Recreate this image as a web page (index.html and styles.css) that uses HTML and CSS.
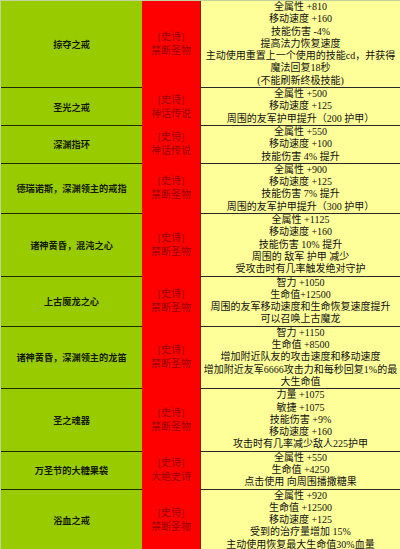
FILE: index.html
```html
<!DOCTYPE html>
<html lang="zh-CN">
<head>
<meta charset="utf-8">
<title>装备列表</title>
<link rel="stylesheet" href="styles.css">
</head>
<body>
<div class="sheet">
  <div class="row">
    <div class="name">掠夺之戒</div>
    <div class="rank"><span>[史诗]</span><span>禁断圣物</span></div>
    <div class="stats">
      <div>全属性 +810</div>
      <div>移动速度 +160</div>
      <div>技能伤害 -4%</div>
      <div>提高法力恢复速度</div>
      <div>主动使用重置上一个使用的技能cd，并获得</div>
      <div>魔法回复18秒</div>
      <div>(不能刷新终极技能)</div>
    </div>
  </div>
  <div class="row">
    <div class="name">圣光之戒</div>
    <div class="rank"><span>[史诗]</span><span>神话传说</span></div>
    <div class="stats">
      <div>全属性 +500</div>
      <div>移动速度 +125</div>
      <div>周围的友军护甲提升（200 护甲）</div>
    </div>
  </div>
  <div class="row">
    <div class="name">深渊指环</div>
    <div class="rank"><span>[史诗]</span><span>神话传说</span></div>
    <div class="stats">
      <div>全属性 +550</div>
      <div>移动速度 +100</div>
      <div>技能伤害 4% 提升</div>
    </div>
  </div>
  <div class="row">
    <div class="name">德瑞诺斯，深渊领主的戒指</div>
    <div class="rank"><span>[史诗]</span><span>禁断圣物</span></div>
    <div class="stats">
      <div>全属性 +900</div>
      <div>移动速度 +125</div>
      <div>技能伤害 7% 提升</div>
      <div>周围的友军护甲提升（300 护甲）</div>
    </div>
  </div>
  <div class="row">
    <div class="name">诸神黄昏，混沌之心</div>
    <div class="rank"><span>[史诗]</span><span>禁断圣物</span></div>
    <div class="stats">
      <div>全属性 +1125</div>
      <div>移动速度 +160</div>
      <div>技能伤害 10% 提升</div>
      <div>周围的 敌军 护甲 减少</div>
      <div>受攻击时有几率触发绝对守护</div>
    </div>
  </div>
  <div class="row">
    <div class="name">上古魔龙之心</div>
    <div class="rank"><span>[史诗]</span><span>禁断圣物</span></div>
    <div class="stats">
      <div>智力 +1050</div>
      <div>生命值+12500</div>
      <div>周围的友军移动速度和生命恢复速度提升</div>
      <div>可以召唤上古魔龙</div>
    </div>
  </div>
  <div class="row">
    <div class="name">诸神黄昏，深渊领主的龙笛</div>
    <div class="rank"><span>[史诗]</span><span>禁断圣物</span></div>
    <div class="stats">
      <div>智力 +1150</div>
      <div>生命值 +8500</div>
      <div>增加附近队友的攻击速度和移动速度</div>
      <div>增加附近友军6666攻击力和每秒回复1%的最</div>
      <div>大生命值</div>
    </div>
  </div>
  <div class="row">
    <div class="name">圣之魂器</div>
    <div class="rank"><span>[史诗]</span><span>禁断圣物</span></div>
    <div class="stats">
      <div>力量 +1075</div>
      <div>敏捷 +1075</div>
      <div>技能伤害 +9%</div>
      <div>移动速度 +160</div>
      <div>攻击时有几率减少敌人225护甲</div>
    </div>
  </div>
  <div class="row">
    <div class="name">万圣节的大糖果袋</div>
    <div class="rank"><span>[史诗]</span><span>大绝史诗</span></div>
    <div class="stats">
      <div>全属性 +550</div>
      <div>生命值 +4250</div>
      <div>点击使用 向周围播撒糖果</div>
    </div>
  </div>
  <div class="row">
    <div class="name">浴血之戒</div>
    <div class="rank"><span>[史诗]</span><span>禁断圣物</span></div>
    <div class="stats">
      <div>全属性 +920</div>
      <div>生命值 +12500</div>
      <div>移动速度 +125</div>
      <div>受到的治疗量增加 15%</div>
      <div>主动使用恢复最大生命值30%血量</div>
    </div>
  </div>
</div>
</body>
</html>
```
FILE: styles.css
```css
html, body {
  margin: 0;
  padding: 0;
  background: #ffffff;
}

.sheet {
  width: 400px;
  box-sizing: border-box;
  border-top: 1px solid #c3d29a;
  border-left: 1px solid #c3d29a;
  font-family: "Liberation Serif", "Noto Sans CJK SC", serif;
}

.row {
  display: grid;
  grid-template-columns: 141px 58px 200px;
}

.name {
  background: #99cc00;
  border-bottom: 1px solid #1f2a05;
  display: flex;
  align-items: center;
  justify-content: center;
  font-family: "Noto Sans CJK SC", "Noto Sans", sans-serif;
  font-size: 9.2px;
  font-weight: bold;
  color: #141a00;
  white-space: nowrap;
}

.rank {
  background: #ff0000;
  border-bottom: 1px solid #ff0000;
  display: flex;
  flex-direction: column;
  align-items: center;
  justify-content: center;
  font-size: 10px;
  line-height: 14px;
  color: #990000;
  white-space: nowrap;
}

.stats {
  background: #ffff99;
  border-left: 1px solid #8a1a00;
  border-bottom: 1px solid #2a2a2a;
  box-sizing: border-box;
  text-align: center;
  font-size: 10px;
  line-height: 12.3px;
  color: #111;
  white-space: nowrap;
}
```
